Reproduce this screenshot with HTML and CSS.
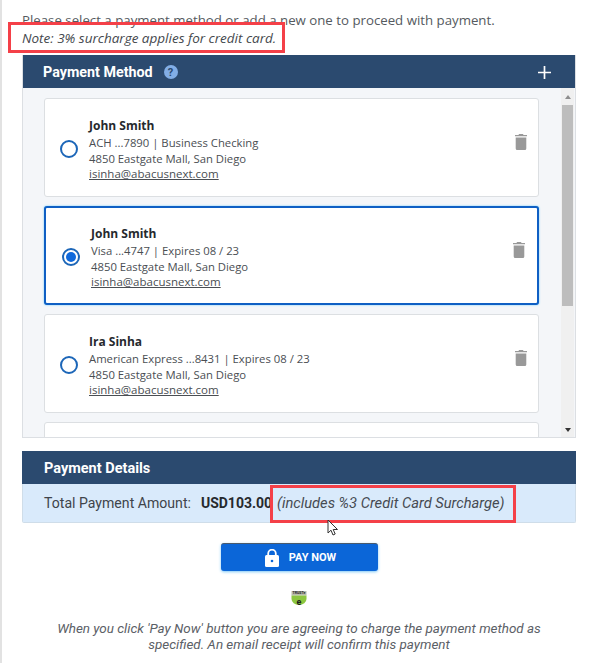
FILE: index.html
```html
<!DOCTYPE html>
<html lang="en">
<head>
<meta charset="utf-8">
<title>Payment</title>
<link rel="stylesheet" href="styles.css">
</head>
<body>
<main class="page">
  <p class="intro">Please select a payment method or add a new one to proceed with payment.</p>
  <p class="note">Note: 3% surcharge applies for credit card.</p>

  <section class="panel methods">
    <header class="panel-head">
      <h2>Payment Method</h2>
      <span class="help">?</span>
      <svg class="plus" width="13" height="13" viewBox="0 0 13 13"><path d="M6.5 0v13M0 6.5h13" stroke="#fff" stroke-width="1.7"/></svg>
    </header>
    <div class="list-wrap">
      <div class="list">
        <article class="card">
          <span class="radio"></span>
          <div class="info">
            <strong>John Smith</strong>
            <span>ACH ...7890 | Business Checking</span>
            <span>4850 Eastgate Mall, San Diego</span>
            <a>isinha@abacusnext.com</a>
          </div>
          <svg class="trash" width="12" height="16" viewBox="0 0 12 16"><path d="M4 0h4l.5 1H12v1.300H0V1h3.500zM.7 3.500h10.600v11a1.500 1.500 0 0 1-1.500 1.500H2.200a1.500 1.500 0 0 1-1.500-1.500z" fill="#999"/></svg>
        </article>
        <article class="card selected">
          <span class="radio on"></span>
          <div class="info">
            <strong>John Smith</strong>
            <span>Visa ...4747 | Expires 08 / 23</span>
            <span>4850 Eastgate Mall, San Diego</span>
            <a>isinha@abacusnext.com</a>
          </div>
          <svg class="trash" width="12" height="16" viewBox="0 0 12 16"><path d="M4 0h4l.5 1H12v1.300H0V1h3.500zM.7 3.500h10.600v11a1.500 1.500 0 0 1-1.500 1.500H2.200a1.500 1.500 0 0 1-1.500-1.500z" fill="#999"/></svg>
        </article>
        <article class="card">
          <span class="radio"></span>
          <div class="info">
            <strong>Ira Sinha</strong>
            <span>American Express ...8431 | Expires 08 / 23</span>
            <span>4850 Eastgate Mall, San Diego</span>
            <a>isinha@abacusnext.com</a>
          </div>
          <svg class="trash" width="12" height="16" viewBox="0 0 12 16"><path d="M4 0h4l.5 1H12v1.300H0V1h3.500zM.7 3.500h10.600v11a1.500 1.500 0 0 1-1.500 1.500H2.200a1.500 1.500 0 0 1-1.500-1.500z" fill="#999"/></svg>
        </article>
        <article class="card"></article>
      </div>
      <div class="scrollbar">
        <span class="arrow up"></span>
        <span class="thumb"></span>
        <span class="arrow down"></span>
      </div>
    </div>
  </section>

  <section class="panel details">
    <header class="panel-head slim"><h2>Payment Details</h2></header>
    <div class="total">
      <span>Total Payment Amount:</span>
      <b>USD103.00</b>
      <i>(includes %3 Credit Card Surcharge)</i>
    </div>
  </section>

  <div class="actions">
    <button class="pay" type="button">
      <svg width="14" height="18" viewBox="0 0 14 18"><path d="M3.200 7V4.500a3.800 3.800 0 0 1 7.600 0V7" fill="none" stroke="#fff" stroke-width="1.800"/><rect x="0" y="6" width="14" height="12" rx="1.500" fill="#fff"/><circle cx="7" cy="12" r="1.300" fill="#0b66d8"/></svg>
      <span>PAY NOW</span>
    </button>
    <svg class="seal" width="16" height="16" viewBox="0 0 16 16">
      <rect x="0.500" y="0" width="15" height="4.500" fill="#b9bcae"/>
      <text x="8" y="3.400" text-anchor="middle" class="seal-text">TRUSTe</text>
      <path d="M0.500 4.500h15v3.500a7.500 6 0 0 1-15 0z" fill="#8cc63f"/>
      <text x="8" y="13.500" text-anchor="middle" class="seal-mark">e</text>
    </svg>
    <p class="legal">When you click 'Pay Now' button you are agreeing to charge the payment method as specified. An email receipt will confirm this payment</p>
  </div>

  <span class="callout callout-note"></span>
  <span class="callout callout-total"></span>
  <svg class="cursor" width="12" height="18" viewBox="0 0 12 18"><path d="M1 1v13l3-2.800 2 4.800 2.200-1-2-4.500h4.300z" fill="#fff" stroke="#333" stroke-width="1"/></svg>
</main>
</body>
</html>
```
FILE: styles.css
```css
* { box-sizing: border-box; }
html, body { margin: 0; background: #fff; }
body { width: 593px; height: 663px; overflow: hidden; font-family: "Open Sans", "Noto Sans", sans-serif; color: #3d4146; }
.page { position: relative; height: 663px; padding: 10px 17px 0 20px; border-left: 2px solid #e2e2e2; }
.intro { margin: 0; font-size: 13.25px; line-height: 20px; color: #555a60; }
.note { margin: -2px 0 0; font-size: 13.5px; line-height: 20px; font-style: italic; color: #44484d; }
.panel { border: 1px solid #dcdfe3; border-top: 0; }
.methods { margin-top: 7px; }
.panel-head { display: flex; align-items: center; height: 33px; padding: 1px 24px 0 20px; background: #2b4a6f; color: #fff; }
.panel-head h2 { margin: 0; font: 700 14.300px/1 Roboto, sans-serif; }
.help { display: grid; place-items: center; width: 14px; height: 14px; margin-left: 11px; border-radius: 50%; background: #82aee6; color: #2b4a6f; font: 700 11px/1 Roboto, sans-serif; }
.plus { margin-left: auto; }
.list-wrap { display: flex; height: 349px; overflow: hidden; background: #f4f6f9; padding: 10px 1px 0 21px; }
.list { flex: 1; display: flex; flex-direction: column; gap: 9px; padding-right: 22px; }
.card { flex: none; display: flex; align-items: center; height: 99px; padding: 0 11px 0 15px; background: #fff; border: 1px solid #dcdfe2; border-radius: 3px; }
.card.selected { border: 2px solid #0f5fc4; box-shadow: 0 0 2px #5cc8ff; padding: 0 12px 0 16px; }
.radio { flex: none; width: 18px; height: 18px; margin-top: 2px; margin-right: 11px; border: 2px solid #1c66b8; border-radius: 50%; background: #fff; }
.radio.on { display: grid; place-items: center; }
.radio.on::after { content: ""; width: 10px; height: 10px; border-radius: 50%; background: #0f69dc; }
.info { flex: 1; display: flex; flex-direction: column; padding-top: 5px; font-size: 11.300px; line-height: 16px; color: #4a4e53; }
.info strong { margin-bottom: 1px; font-size: 12px; color: #26292d; font-weight: 700; }
.info a { margin-top: -1px; font-size: 11.500px; text-decoration: underline; }
.trash { flex: none; margin-top: -12px; }
.scrollbar { flex: none; width: 13px; margin-top: -10px; display: flex; flex-direction: column; align-items: center; background: #f0f0f0; }
.thumb { width: 11px; height: 201px; background: #bdbdbd; }
.arrow { width: 0; height: 0; border-left: 3px solid transparent; border-right: 3px solid transparent; }
.arrow.up { border-bottom: 4px solid #8d8d8d; margin: 7px 0 6px; }
.arrow.down { border-top: 4px solid #333; margin: auto 0 5px; }
.details { margin-top: 13px; border: 1px solid #cfdde9; border-top: 0; border-radius: 0 0 2px 2px; }
.panel-head.slim { margin: 0 -1px; padding: 3px 0 0 22px; }
.panel-head.slim h2 { font-size: 14.500px; }
.total { display: flex; align-items: center; height: 38px; padding-left: 21px; background: #d9eafb; font: 400 14.100px/1 Roboto, sans-serif; color: #3f444a; }
.total b { margin-left: 10px; font-size: 14px; color: #26292d; font-weight: 700; }
.total i { margin-left: 5px; font-size: 14.700px; color: #464b52; }
.actions { display: flex; flex-direction: column; align-items: center; padding-top: 20px; }
.pay { display: flex; align-items: center; justify-content: center; gap: 10px; width: 157px; height: 28px; padding: 0 0 0 3px; border: 0; border-top: 1px solid #4a5a6c; border-radius: 3px; background: #0b66d8; color: #fff; font: 700 11px/1 Roboto, sans-serif; box-shadow: 0 1px 3px #7fc8f5; }
.seal { margin-top: 20px; }
.seal-text { font: 700 3.500px Roboto, sans-serif; fill: #222; }
.seal-mark { font: 700 9px/1 Roboto, sans-serif; fill: #1d1d1d; }
.legal { margin: 14px 0 0; width: 520px; text-align: center; font: italic 400 13.440px/16px Roboto, sans-serif; color: #5b6066; }
.callout { position: absolute; border: 3px solid #f44048; }
.callout-note { left: 6px; top: 22px; width: 277px; height: 31px; }
.callout-total { left: 268px; top: 485px; width: 246px; height: 38px; }
.cursor { position: absolute; left: 325px; top: 519px; }
```
